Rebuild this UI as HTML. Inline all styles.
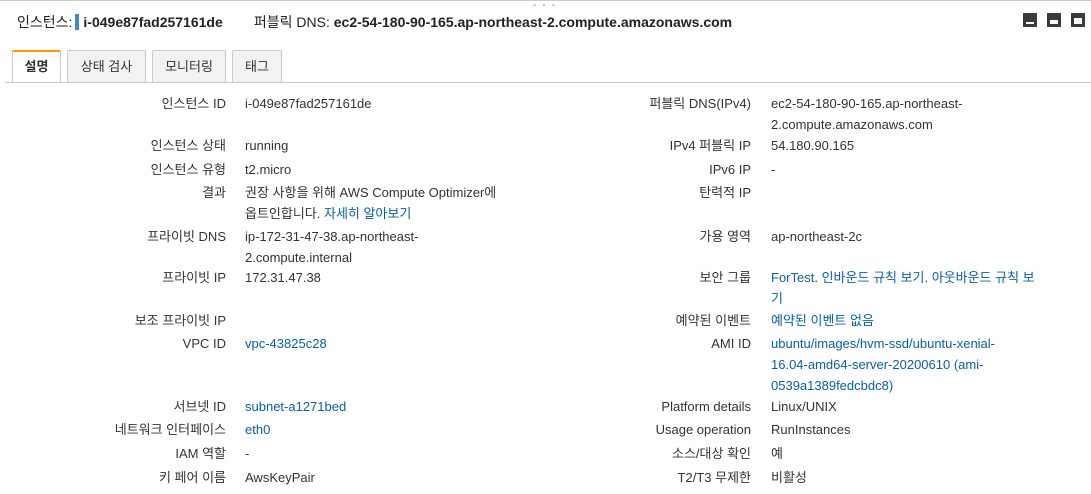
<!DOCTYPE html>
<html><head><meta charset="utf-8"><style>
body{margin:0;width:1091px;height:494px;background:#fff;font-family:"Liberation Sans","Noto Sans CJK KR",sans-serif;color:#333;overflow:hidden;position:relative;font-size:13px}
.topline{position:absolute;left:0;right:0;top:0;height:1px;background:#ccc}
.hdr{position:absolute;top:12px;left:17px;font-size:14px;color:#222;white-space:nowrap}
.hdr b{font-weight:bold}
.bar{display:inline-block;width:4px;height:16px;background:#3b8ad9;vertical-align:-3px;margin:0 4px 0 3px}
.ic{position:absolute;top:13px;width:14px;height:14px;background:#3a3a3a}
.ic i{position:absolute;left:3px;right:3px;bottom:3px;background:#fff}
.tab{position:absolute;top:50px;height:32px;border:1px solid #ccc;border-bottom:none;background:#f2f2f2;box-sizing:border-box;text-align:center;line-height:31px;font-size:13px;color:#333;border-radius:2px 2px 0 0}
.tab.a{background:#fff;border-top:2px solid #f90;font-weight:bold;height:33px;line-height:29px}
.line{position:absolute;left:5px;right:0;top:82px;height:1px;background:#ccc}
.l{position:absolute;width:220px;text-align:right;white-space:nowrap;line-height:21px}
.v{position:absolute;white-space:nowrap;line-height:21px}
a{color:#0a5fa8;text-decoration:none}
.dots{position:absolute;top:3px;left:533px;font-size:8px;color:#999;letter-spacing:2px}
</style></head><body>
<div class="topline"></div>
<div class="dots">° ° °</div>
<div class="hdr">인스턴스:<span class="bar"></span><b>i-049e87fad257161de</b>&nbsp;&nbsp;&nbsp;&nbsp;&nbsp;&nbsp;&nbsp;&nbsp;퍼블릭 DNS: <b>ec2-54-180-90-165.ap-northeast-2.compute.amazonaws.com</b></div>
<div class="ic" style="left:1023px"><i style="height:2px"></i></div>
<div class="ic" style="left:1047px"><i style="height:4px"></i></div>
<div class="ic" style="left:1071px"><i style="height:6px"></i></div>
<div class="tab a" style="left:12px;width:49px">설명</div>
<div class="tab" style="left:67px;width:79px">상태 검사</div>
<div class="tab" style="left:152px;width:74px">모니터링</div>
<div class="tab" style="left:232px;width:50px">태그</div>
<div class="line"></div>

<div class="l" style="left:6px;top:93px">인스턴스 ID</div><div class="v" style="left:245px;top:93px">i-049e87fad257161de</div>
<div class="l" style="left:6px;top:135px">인스턴스 상태</div><div class="v" style="left:245px;top:135px">running</div>
<div class="l" style="left:6px;top:159px">인스턴스 유형</div><div class="v" style="left:245px;top:159px">t2.micro</div>
<div class="l" style="left:6px;top:182px">결과</div><div class="v" style="left:245px;top:182px">권장 사항을 위해 AWS Compute Optimizer에<br>옵트인합니다. <a>자세히 알아보기</a></div>
<div class="l" style="left:6px;top:226px">프라이빗 DNS</div><div class="v" style="left:245px;top:226px">ip-172-31-47-38.ap-northeast-<br>2.compute.internal</div>
<div class="l" style="left:6px;top:267px">프라이빗 IP</div><div class="v" style="left:245px;top:267px">172.31.47.38</div>
<div class="l" style="left:6px;top:310px">보조 프라이빗 IP</div>
<div class="l" style="left:6px;top:333px">VPC ID</div><div class="v" style="left:245px;top:333px"><a>vpc-43825c28</a></div>
<div class="l" style="left:6px;top:396px">서브넷 ID</div><div class="v" style="left:245px;top:396px"><a>subnet-a1271bed</a></div>
<div class="l" style="left:6px;top:419px">네트워크 인터페이스</div><div class="v" style="left:245px;top:419px"><a>eth0</a></div>
<div class="l" style="left:6px;top:443px">IAM 역할</div><div class="v" style="left:245px;top:443px">-</div>
<div class="l" style="left:6px;top:467px">키 페어 이름</div><div class="v" style="left:245px;top:467px">AwsKeyPair</div>

<div class="l" style="left:531px;top:93px">퍼블릭 DNS(IPv4)</div><div class="v" style="left:771px;top:93px">ec2-54-180-90-165.ap-northeast-<br>2.compute.amazonaws.com</div>
<div class="l" style="left:531px;top:135px">IPv4 퍼블릭 IP</div><div class="v" style="left:771px;top:135px">54.180.90.165</div>
<div class="l" style="left:531px;top:159px">IPv6 IP</div><div class="v" style="left:771px;top:159px">-</div>
<div class="l" style="left:531px;top:182px">탄력적 IP</div>
<div class="l" style="left:531px;top:226px">가용 영역</div><div class="v" style="left:771px;top:226px">ap-northeast-2c</div>
<div class="l" style="left:531px;top:267px">보안 그룹</div><div class="v" style="left:771px;top:267px"><a>ForTest</a>. <a>인바운드 규칙 보기</a>. <a>아웃바운드 규칙 보</a><br><a>기</a></div>
<div class="l" style="left:531px;top:310px">예약된 이벤트</div><div class="v" style="left:771px;top:310px"><a>예약된 이벤트 없음</a></div>
<div class="l" style="left:531px;top:333px">AMI ID</div><div class="v" style="left:771px;top:333px"><a>ubuntu/images/hvm-ssd/ubuntu-xenial-<br>16.04-amd64-server-20200610 (ami-<br>0539a1389fedcbdc8)</a></div>
<div class="l" style="left:531px;top:396px">Platform details</div><div class="v" style="left:771px;top:396px">Linux/UNIX</div>
<div class="l" style="left:531px;top:419px">Usage operation</div><div class="v" style="left:771px;top:419px">RunInstances</div>
<div class="l" style="left:531px;top:443px">소스/대상 확인</div><div class="v" style="left:771px;top:443px">예</div>
<div class="l" style="left:531px;top:467px">T2/T3 무제한</div><div class="v" style="left:771px;top:467px">비활성</div>
</body></html>
